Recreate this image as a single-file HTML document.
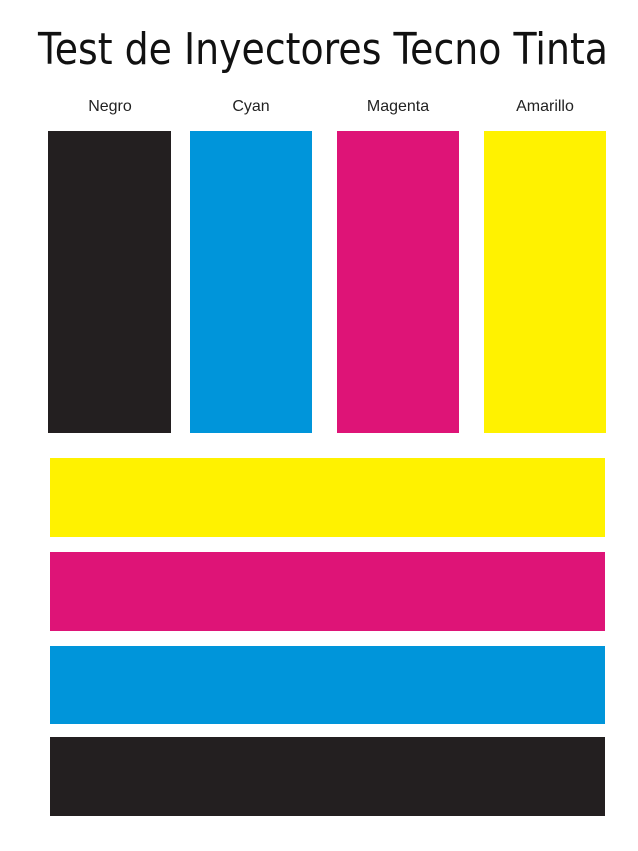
<!DOCTYPE html>
<html><head><meta charset="utf-8"><style>
html,body{margin:0;padding:0;background:#fff;width:638px;height:851px;overflow:hidden}
svg{display:block}
</style></head><body>
<svg width="638" height="851" viewBox="0 0 638 851" xmlns="http://www.w3.org/2000/svg">
<rect width="638" height="851" fill="#fff"/>
<text x="38" y="64" font-family="DejaVu Sans, Liberation Sans, sans-serif" font-size="44" fill="#111" textLength="570" lengthAdjust="spacingAndGlyphs">Test de Inyectores Tecno Tinta</text>
<g font-family="Liberation Sans, sans-serif" font-size="16" fill="#222" text-anchor="middle">
<text x="110" y="111">Negro</text>
<text x="251" y="111">Cyan</text>
<text x="398" y="111">Magenta</text>
<text x="545" y="111">Amarillo</text>
</g>
<rect x="48" y="131" width="123" height="302" fill="#231f20"/>
<rect x="190" y="131" width="122" height="302" fill="#0095da"/>
<rect x="337" y="131" width="122" height="302" fill="#de1477"/>
<rect x="484" y="131" width="122" height="302" fill="#fff200"/>
<rect x="50" y="458" width="555" height="79" fill="#fff200"/>
<rect x="50" y="552" width="555" height="79" fill="#de1477"/>
<rect x="50" y="646" width="555" height="78" fill="#0095da"/>
<rect x="50" y="737" width="555" height="79" fill="#231f20"/>
</svg>
</body></html>
